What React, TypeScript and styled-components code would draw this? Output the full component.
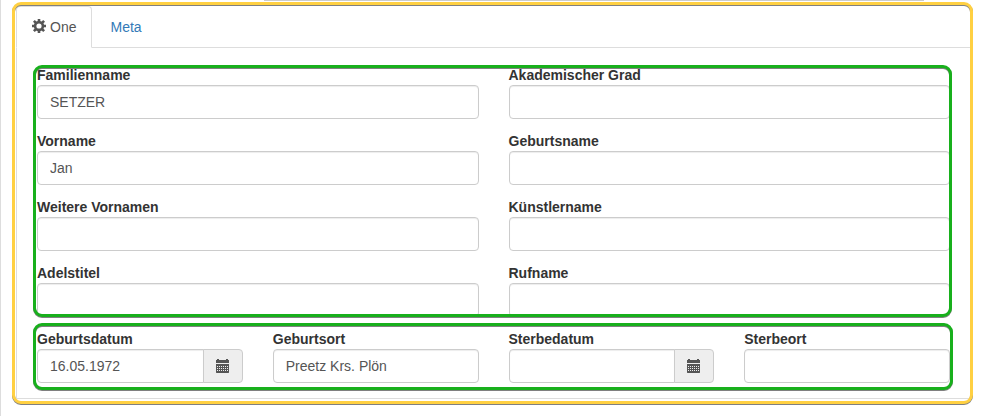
import React, { useState } from "react";
import styled, { createGlobalStyle } from "styled-components";

const GlobalStyle = createGlobalStyle`
  *, *::before, *::after { box-sizing: border-box; }
  body {
    margin: 0;
    background: #fff;
    color: #333;
    font: 14px/20px "Liberation Sans", Arial, sans-serif;
  }
  input, button { font: inherit; }
`;

const Page = styled.main`
  min-height: 100vh;
  border-left: 1px solid #ddd;
`;

const TopRule = styled.div`
  height: 1px;
  margin: 0 64px 1px 263px;
  background: #ccc;
`;

const Outlined = styled.section<{ $color: string; $inset: string }>`
  position: relative;
  &::after {
    content: "";
    position: absolute;
    inset: ${(p) => p.$inset};
    border: 3px solid ${(p) => p.$color};
    border-radius: 9px;
    filter: drop-shadow(0 1px 0 #808080);
    pointer-events: none;
  }
`;

const Card = styled(Outlined)`
  margin: 0 15px 0 11px;
  padding: 4px 3px 5px 4px;
`;

const TabList = styled.div`
  display: flex;
  gap: 2px;
  border-bottom: 1px solid #ddd;
`;

const Tab = styled.button<{ $active: boolean }>`
  display: flex;
  align-items: center;
  gap: 4px;
  margin-bottom: -1px;
  padding: 10px 15px;
  border: 1px solid ${(p) => (p.$active ? "#ddd" : "transparent")};
  border-bottom-color: ${(p) => (p.$active ? "#fff" : "#ddd")};
  border-radius: 4px 4px 0 0;
  background: ${(p) => (p.$active ? "#fff" : "transparent")};
  color: ${(p) => (p.$active ? "#555" : "#337ab7")};
  cursor: pointer;
`;

const Panel = styled.div`
  display: flex;
  flex-direction: column;
  gap: 12px;
  padding: 17px 20px 15px;
  border: solid #ddd;
  border-width: 0 0 1px 1px;
`;

const FieldGrid = styled.div<{ $columns: number }>`
  display: grid;
  grid-template-columns: repeat(${(p) => p.$columns}, minmax(0, 1fr));
  gap: 12px 30px;
`;

const FieldBox = styled.div`
  display: flex;
  flex-direction: column;
`;

const Label = styled.label`
  font-weight: bold;
`;

const InputGroup = styled.div`
  display: flex;
`;

const Input = styled.input<{ $joined?: boolean }>`
  flex: 1;
  width: 100%;
  min-width: 0;
  height: 34px;
  padding: 6px 12px;
  border: 1px solid #ccc;
  border-radius: ${(p) => (p.$joined ? "4px 0 0 4px" : "4px")};
  background: #fff;
  color: #555;
  box-shadow: inset 0 1px 1px rgba(0, 0, 0, 0.075);
`;

const PickerButton = styled.button`
  display: flex;
  align-items: center;
  margin-left: -1px;
  padding: 6px 12px;
  border: 1px solid #ccc;
  border-radius: 0 4px 4px 0;
  background: #eee;
  color: #555;
  cursor: pointer;
`;

function GearIcon() {
  return (
    <svg width="14" height="16" viewBox="0 0 14 16" fill="none" stroke="currentColor" aria-hidden="true">
      <circle cx="7" cy="7" r="3.9" strokeWidth="2.6" />
      <path
        strokeWidth="2.6"
        d="M7 0v2.6M7 11.4v2.6M0 7h2.6M11.4 7h2.6M1.9 1.900l2 2M10.1 10.1l2 2M12.1 1.9l-2 2M3.9 10.1l-2 2"
      />
    </svg>
  );
}

function CalendarIcon() {
  return (
    <svg width="14" height="14" viewBox="1 0 14 14" fill="currentColor" aria-hidden="true">
      <path d="M2 0h2v1h7V0h2v1h1v3H1V1h1z" />
      <path
        fillRule="evenodd"
        d="M1 5h13v8.5l-.5.5h-12l-.5-.5zM2 7v1h1V7zm2 0v1h1V7zm2 0v1h1V7zm2 0v1h1V7zm2 0v1h1V7zm2 0v1h1V7zM2 9v1h1V9zm2 0v1h1V9zm2 0v1h1V9zm2 0v1h1V9zm2 0v1h1V9zm2 0v1h1V9zM2 11v1h1v-1zm2 0v1h1v-1zm2 0v1h1v-1zm2 0v1h1v-1zm2 0v1h1v-1zm2 0v1h1v-1z"
      />
    </svg>
  );
}

type FieldData = { id: string; label: string; value?: string; date?: boolean };

const nameFields: FieldData[] = [
  { id: "familienname", label: "Familienname", value: "SETZER" },
  { id: "grad", label: "Akademischer Grad" },
  { id: "vorname", label: "Vorname", value: "Jan" },
  { id: "geburtsname", label: "Geburtsname" },
  { id: "weitere", label: "Weitere Vornamen" },
  { id: "kuenstlername", label: "Künstlername" },
  { id: "adelstitel", label: "Adelstitel" },
  { id: "rufname", label: "Rufname" },
];

const lifeFields: FieldData[] = [
  { id: "geburtsdatum", label: "Geburtsdatum", value: "16.05.1972", date: true },
  { id: "geburtsort", label: "Geburtsort", value: "Preetz Krs. Plön" },
  { id: "sterbedatum", label: "Sterbedatum", date: true },
  { id: "sterbeort", label: "Sterbeort" },
];

function Field({ id, label, value = "", date }: FieldData) {
  return (
    <FieldBox>
      <Label htmlFor={id}>{label}</Label>
      <InputGroup>
        <Input id={id} type="text" defaultValue={value} $joined={date} />
        {date && (
          <PickerButton type="button" aria-label={label}>
            <CalendarIcon />
          </PickerButton>
        )}
      </InputGroup>
    </FieldBox>
  );
}

export default function App() {
  const [tab, setTab] = useState("one");
  return (
    <Page>
      <GlobalStyle />
      <TopRule />
      <Card $color="#ffd042" $inset="0">
        <TabList role="tablist">
          <Tab type="button" role="tab" aria-selected={tab === "one"} $active={tab === "one"} onClick={() => setTab("one")}>
            <GearIcon />
            One
          </Tab>
          <Tab type="button" role="tab" aria-selected={tab === "meta"} $active={tab === "meta"} onClick={() => setTab("meta")}>
            Meta
          </Tab>
        </TabList>
        <Panel role="tabpanel">
          <Outlined $color="#18b01c" $inset="0 -2px 0 -4px">
            <FieldGrid $columns={2}>
              {nameFields.map((f) => (
                <Field key={f.id} {...f} />
              ))}
            </FieldGrid>
          </Outlined>
          <Outlined $color="#18b01c" $inset="-6px -3px -7px -4px">
            <FieldGrid $columns={4}>
              {lifeFields.map((f) => (
                <Field key={f.id} {...f} />
              ))}
            </FieldGrid>
          </Outlined>
        </Panel>
      </Card>
    </Page>
  );
}
